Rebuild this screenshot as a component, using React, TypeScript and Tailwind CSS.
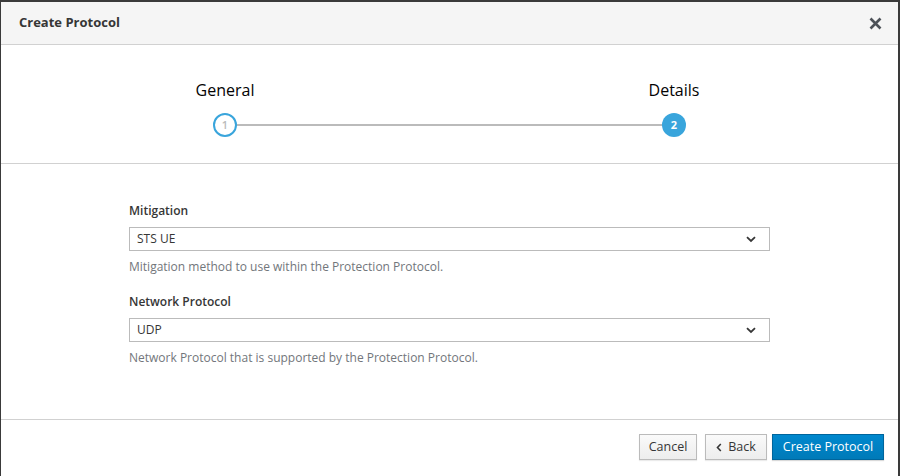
import React from "react";

const Chevron = () => (
  <svg width="10" height="7" viewBox="0 0 10 7" className="text-[#363636]">
    <path d="M1 1.2 L5 5 L9 1.2" fill="none" stroke="currentColor" strokeWidth="1.8" />
  </svg>
);

function Select({ value }: { value: string }) {
  return (
    <div className="flex h-[24px] items-center justify-between border border-[#bbbbbb] bg-white pl-[7px] pr-[13px] text-[12px] text-[#363636]">
      <span>{value}</span>
      <Chevron />
    </div>
  );
}

export default function App() {
  return (
    <div className="h-[476px] w-[900px] overflow-hidden bg-[#3a3a3a] pt-[2px] pl-[1px] pr-[2px]" style={{ fontFamily: '"Open Sans", sans-serif' }}>
      <div className="flex h-[474px] flex-col bg-white">
        {/* header */}
        <div className="flex h-[43px] shrink-0 items-center justify-between border-b border-[#d1d1d1] bg-[#f5f5f5] pl-[18px] pr-[16px]">
          <h1 className="text-[13px] font-bold text-[#363636]">Create Protocol</h1>
          <svg width="13" height="13" viewBox="0 0 13 13" className="text-[#4d5258]">
            <path d="M1.5 1.5 L11.5 11.5 M11.5 1.5 L1.5 11.5" stroke="currentColor" strokeWidth="2.6" />
          </svg>
        </div>
        {/* wizard steps */}
        <div className="flex h-[119px] shrink-0 justify-center border-b border-[#d1d1d1] pt-[34px]">
          <div className="relative w-[511px]">
            <div className="absolute left-[31px] right-[31px] top-[45px] h-[2px] bg-[#bbbbbb]" />
            <div className="flex justify-between">
              <div className="flex w-[62px] flex-col items-center">
                <span className="text-[16px] leading-[22px] text-[#030303]">General</span>
                <div className="relative z-10 mt-[12px] flex h-[24px] w-[24px] items-center justify-center rounded-full border-2 border-[#39a5dc] bg-white text-[11px] font-semibold text-[#bbbbbb]">1</div>
              </div>
              <div className="flex w-[62px] flex-col items-center">
                <span className="text-[16px] leading-[22px] text-[#030303]">Details</span>
                <div className="relative z-10 mt-[12px] flex h-[24px] w-[24px] items-center justify-center rounded-full bg-[#39a5dc] text-[11px] font-bold text-white">2</div>
              </div>
            </div>
          </div>
        </div>
        {/* body */}
        <div className="flex-1 pl-[128px] pr-[128px] pt-[38px]">
          <div className="flex flex-col">
            <label className="text-[12px] font-semibold leading-[17px] text-[#363636]">Mitigation</label>
            <div className="mt-[8px]"><Select value="STS UE" /></div>
            <p className="mt-[7px] text-[12px] leading-[18px] text-[#72767b]">Mitigation method to use within the Protection Protocol.</p>
            <label className="mt-[17px] text-[12px] font-semibold leading-[17px] text-[#363636]">Network Protocol</label>
            <div className="mt-[8px]"><Select value="UDP" /></div>
            <p className="mt-[7px] text-[12px] leading-[18px] text-[#72767b]">Network Protocol that is supported by the Protection Protocol.</p>
          </div>
        </div>
        {/* footer */}
        <div className="flex h-[57px] shrink-0 items-start justify-end gap-[5px] border-t border-[#d1d1d1] pr-[14px] pt-[14px]">
          <button className="mr-[3px] h-[26px] w-[58px] border border-[#bbbbbb] bg-gradient-to-b from-[#fafafa] to-[#ededed] text-[12.5px] text-[#363636] shadow-[0_1px_1px_rgba(3,3,3,0.08)]">Cancel</button>
          <button className="flex h-[26px] w-[62px] items-center justify-center gap-[6px] border border-[#bbbbbb] bg-gradient-to-b from-[#fafafa] to-[#ededed] text-[12.5px] text-[#363636] shadow-[0_1px_1px_rgba(3,3,3,0.08)]">
            <svg width="6" height="9" viewBox="0 0 6 9"><path d="M4.8 1 L1.5 4.5 L4.8 8" fill="none" stroke="#363636" strokeWidth="1.6" /></svg>
            Back
          </button>
          <button className="h-[26px] w-[112px] border border-[#00659c] bg-gradient-to-b from-[#0088ce] to-[#007ab8] text-[12.5px] text-white shadow-[0_1px_1px_rgba(3,3,3,0.15)]">Create Protocol</button>
        </div>
      </div>
    </div>
  );
}
